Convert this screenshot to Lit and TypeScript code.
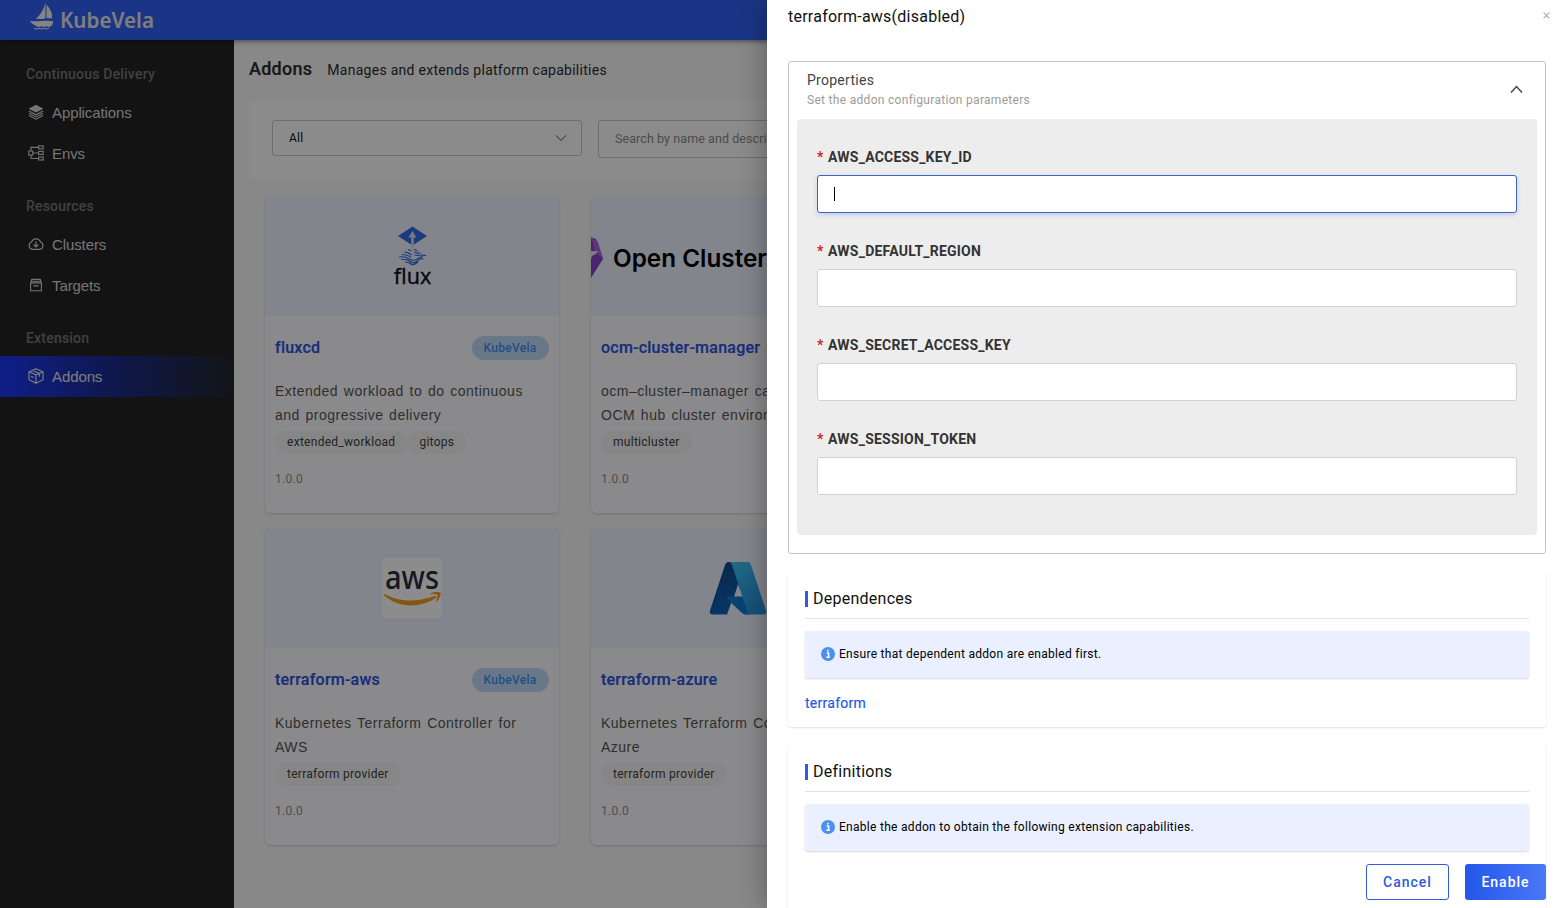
import { LitElement, html, css, svg, nothing } from "lit";
import { customElement, property } from "lit/decorators.js";

const icons: Record<string, unknown> = {
  layers: svg`<path fill="currentColor" d="M8 .8 15.4 4.7 8 8.6.6 4.7Z"/><path fill="none" stroke="currentColor" stroke-width="1.1" d="M.9 7.1 8 10.8l7.1-3.7M.9 9.3 8 13l7.1-3.7M.9 11.5 8 15.2l7.1-3.7"/>`,
  tree: svg`<g fill="none" stroke="currentColor" stroke-width="1.1"><rect x=".8" y="6" width="4" height="4"/><rect x="10.6" y=".9" width="4.6" height="3"/><rect x="10.6" y="6.4" width="4.6" height="3"/><rect x="10.6" y="12" width="4.6" height="3"/><path d="M10.6 2.4H3v3.6M4.8 8h5.8M3 10v3.5h7.6"/></g>`,
  cloud: svg`<path fill="none" stroke="currentColor" stroke-width="1.2" d="M4.4 13.3A3.8 3.8 0 0 1 3.6 6 4.7 4.7 0 0 1 12.5 6a3.8 3.8 0 0 1-.8 7.3ZM8 5.6v5M5.6 8.6 8 11l2.4-2.4"/>`,
  archive: svg`<path fill="none" stroke="currentColor" stroke-width="1.1" d="M2.6 5.9h10.8v7.8H2.6ZM2.8 5.7l.9-3.3h8.6l.9 3.3M3.3 4.2h9.4M5.4 8.9h5.2"/>`,
  box: svg`<path fill="none" stroke="currentColor" stroke-width="1.2" stroke-linejoin="round" d="M8 .9 15 3.8v8L8 15.2 1 11.8v-8ZM1 3.8 8 6.9l7-3.1M8 6.9v8.3M4.5 2.4l7 3.1v3.2M3 8.4l2.6 1.2"/>`,
};

@customElement("vela-nav")
class VelaNav extends LitElement {
  static styles = css`
    :host { display: block; width: 234px; flex: none; background: #242424; padding-top: 2px; box-sizing: border-box; font-family: Roboto, sans-serif; }
    .title { padding: 22px 26px 8px; line-height: 20px; font-size: 14px; font-weight: 500; letter-spacing: .2px; color: #777; }
    .item { display: flex; align-items: center; height: 41px; padding-left: 28px; gap: 8px; color: #d6d6d6; font: 15px "Liberation Sans", sans-serif; letter-spacing: -.1px; }
    .item svg { width: 16px; height: 16px; flex: none; margin-bottom: 1px; }
    .active { background: linear-gradient(90deg, #1b38f7, #1d2a80 55%, #202833 96%, #242424); color: #e2e2e8; }
  `;
  groups = [
    { title: "Continuous Delivery", items: [["layers", "Applications"], ["tree", "Envs"]] },
    { title: "Resources", items: [["cloud", "Clusters"], ["archive", "Targets"]] },
    { title: "Extension", items: [["box", "Addons"]] },
  ];
  render() {
    return this.groups.map(
      (g) => html`<div class="title">${g.title}</div>
        ${g.items.map(([icon, label]) => html`<div class="item ${label === "Addons" ? "active" : ""}"><svg viewBox="0 0 16 16">${icons[icon]}</svg><span>${label}</span></div>`)}`
    );
  }
}

interface Addon { name: string; desc: string[]; tags: string[]; logo: unknown; }

const fluxLogo = html`<svg width="60" height="64" viewBox="0 -1 60 64" overflow="visible">
  <path fill="#326ce5" d="M30.5 1.500 45 11 30.500 20.500 16 11Z"/>
  <path fill="#d8e0ee" d="M30.500 6l4 6.500h-2.700V32h-2.600V12.500h-2.700Z"/>
  <g fill="none" stroke="#326ce5" stroke-width="1.2"><path d="M26 24.500q2 1 3 1.500M22.500 27q4 0 6.500 3M19.500 29.500q6 0 9.500 3M17 32q6-1 10 2t10-1 7-2M19 34.500q5-1 9 2t8-1 5-1M23 37q4 0 6 2t7-2M32.500 24q1 2 3 1.500M32.500 27q3 2 6 .5M32.500 30q4 1 8.500-.5"/></g>
  <text x="30.500" y="59" text-anchor="middle" font-family="Noto Sans" font-size="22.500" textLength="37.500" lengthAdjust="spacingAndGlyphs" fill="#111" stroke="#111" stroke-width=".3">flux</text>
</svg>`;
const ocmLogo = html`<svg width="294" height="120" viewBox="0 0 294 120">
  <path fill="#8a3fd0" d="M-4 40 5 43 12 63 0 82-6 84Z"/><path fill="#a964e0" d="M0 41 7 46 12 63 4 55Z"/><path fill="#e3e2f1" d="M-2 55h9l-2 3-4 2-3 8Z"/>
  <text x="22" y="71" font-family="Inter" font-weight="600" font-size="24.500" textLength="154" lengthAdjust="spacingAndGlyphs" fill="#000">Open Cluster</text>
</svg>`;
const awsLogo = html`<svg width="60" height="60" viewBox="0 0 60 60" overflow="visible">
  <rect width="60" height="60" rx="1" fill="#fff"/>
  <text x="3" y="30.500" font-family="Noto Sans" font-weight="500" font-size="32" textLength="54" lengthAdjust="spacingAndGlyphs" fill="#252f3e">aws</text>
  <path fill="#f79b1e" d="M2 36c1-.7 18 13.500 51 2 2-.6 2 1 .6 2C38 50.500 16 50 2 37.300Z"/>
  <path fill="#f79b1e" d="M48.500 35.500c3-2 9-2 10-.7.700 2-1.500 7-4 9-1 .3-.4-.8 0-2 .8-2 1.600-4 1-5-1.500-1-4-.7-6-.5-1 0-1.500-.5-1-.8Z"/>
</svg>`;
const azureLogo = html`<svg width="60" height="60" viewBox="0 0 60 60">
  <defs>
    <linearGradient id="azl" x1="0" y1="0" x2="0" y2="1"><stop offset="0" stop-color="#114a8b"/><stop offset="1" stop-color="#0b63b8"/></linearGradient>
    <linearGradient id="azr" x1="0" y1="0" x2="0.400" y2="1"><stop offset="0" stop-color="#3fc5ef"/><stop offset="1" stop-color="#2892df"/></linearGradient>
  </defs>
  <path fill="url(#azl)" d="M20.500 4H28L34 26 23 53.500q-1 3-4 3H5q-4 0-3-4L17 7q1-3 3.500-3Z"/>
  <path fill="#edf2ff" d="M30 26 35 39H26ZM23.500 44 37 56.500H19Z"/>
  <path fill="#0f78d4" d="M19.500 38.500H38L42 56.500H37Q35 56 33 54L18.500 40.500Z"/>
  <path fill="url(#azr)" d="M20.500 4H39q3 0 4 3l15 45.500q1 4-3 4H37q3-.5 2-4L24 7q-1-3-3.500-3Z"/>
</svg>`;

@customElement("addon-card")
class AddonCard extends LitElement {
  @property({ attribute: false }) addon!: Addon;
  static styles = css`
    :host { display: block; width: 294px; height: 317px; border-radius: 6px; background: #fcfcff; box-shadow: 0 1px 3px rgba(0, 0, 0, .16); overflow: hidden; font-family: Roboto, sans-serif; }
    .cover { height: 120px; background: #edf2ff; display: flex; align-items: center; justify-content: center; }
    .body { padding: 19px 10px 0 10.500px; }
    .head { display: flex; align-items: center; justify-content: space-between; height: 26px; }
    .name { font-size: 16px; font-weight: 500; letter-spacing: .23px; color: #2b53e0; white-space: nowrap; margin-bottom: 2px; -webkit-text-stroke: .2px #2b53e0; }
    .vela { height: 24px; width: 77px; border-radius: 12px; background: #c0dafa; color: #4191ef; font-size: 12px; font-weight: 500; letter-spacing: .3px; line-height: 24px; text-align: center; }
    .desc { margin-top: 18px; font: 14px/24px "Liberation Sans", sans-serif; letter-spacing: .5px; word-spacing: 1.3px; color: #555; white-space: nowrap; }
    .tags { display: flex; margin-top: 4px; }
    .tag { height: 23px; line-height: 23px; border-radius: 12px; background: #f4f4f4; padding: 0 12px; font-size: 12px; letter-spacing: .28px; color: #404040; white-space: nowrap; }
    .version { margin-top: 15px; line-height: 20px; font-size: 12px; letter-spacing: .3px; color: #8c8c8c; }
  `;
  render() {
    const a = this.addon;
    return html`<div class="cover">${a.logo}</div>
      <div class="body">
        <div class="head"><span class="name">${a.name}</span><span class="vela">KubeVela</span></div>
        <div class="desc">${a.desc.map((d) => html`<div>${d}</div>`)}</div>
        <div class="tags">${a.tags.map((t) => html`<span class="tag">${t}</span>`)}</div>
        <div class="version">1.0.0</div>
      </div>`;
  }
}

@customElement("addon-drawer")
class AddonDrawer extends LitElement {
  static styles = css`
    :host { display: flex; flex-direction: column; box-sizing: border-box; background: #fff; padding: 0 13px 0 21px; font-family: Roboto, sans-serif; letter-spacing: .27px; color: #111; overflow: hidden; }
    .top { display: flex; justify-content: space-between; align-items: center; height: 33px; flex: none; margin-bottom: 28px; font-size: 16px; letter-spacing: .24px; }
    .close { width: 7px; height: 7px; margin: 0 -3.500px 2px 0; }
    .props { border: 1px solid #c4c4c4; border-radius: 3px; height: 493px; box-sizing: border-box; flex: none; padding: 0 8px; }
    .phead { display: flex; justify-content: space-between; align-items: center; height: 57px; padding: 0 14px 0 10px; }
    .ptitle { font-size: 14px; line-height: 20px; margin-top: -1px; color: #444; }
    .psub { font-size: 12px; line-height: 20px; letter-spacing: .3px; color: #9b9b9b; }
    .chev { width: 13px; height: 9px; margin-bottom: 2px; }
    .form { background: #ededed; border-radius: 4px; height: 416px; box-sizing: border-box; padding: 28px 20px 0; }
    .field { height: 94px; }
    .label { font-size: 14px; font-weight: 700; line-height: 20px; letter-spacing: .22px; color: #333; margin-bottom: 8px; }
    .star { color: #c8262c; margin-right: 4.500px; }
    .input { height: 38px; box-sizing: border-box; background: #fff; border: 1px solid #d2d2d2; border-radius: 3px; padding: 11px 16px; }
    .focus { border-color: #3a62c8; box-shadow: 0 2px 5px rgba(40, 80, 190, .2); }
    .caret { width: 1px; height: 14px; background: #000; }
    .section { flex: none; box-sizing: border-box; height: 156px; margin-top: 17px; padding: 17px 17px 0; border-radius: 3px; box-shadow: 0 1px 2px rgba(0, 0, 0, .12); }
    .stitle { display: flex; align-items: center; gap: 5px; height: 21px; padding-bottom: 9px; border-bottom: 1px solid #e2e2e2; font-size: 16px; letter-spacing: .25px; }
    .bar { width: 3px; height: 16px; background: #2f5bdc; }
    .msg { display: flex; align-items: center; gap: 4px; height: 47px; padding: 0 16px 2px; box-sizing: border-box; margin-top: 12px; border-radius: 3px; background: #eaf0ff; box-shadow: 0 1px 2px rgba(0, 0, 0, .16); font-size: 12px; letter-spacing: .29px; color: #000; }
    .msg svg { width: 14px; height: 14px; }
    .link { margin-top: 15px; line-height: 20px; font-size: 14px; color: #2456e0; -webkit-text-stroke: .15px #2456e0; }
    .tall { height: 240px; }
    .actions { position: absolute; right: 13px; bottom: 8px; display: flex; gap: 16px; }
    .btn { height: 36px; box-sizing: border-box; border-radius: 3px; font: 500 14px/34px Roboto, sans-serif; letter-spacing: 1px; text-align: center; padding: 0; }
    .cancel { width: 83px; border: 1px solid #2f5bdc; color: #2f5bdc; background: #fff; }
    .enable { width: 81px; border: 1px solid transparent; color: #fff; background: linear-gradient(90deg, #2457ea, #4a78f8) border-box; }
  `;
  keys = ["AWS_ACCESS_KEY_ID", "AWS_DEFAULT_REGION", "AWS_SECRET_ACCESS_KEY", "AWS_SESSION_TOKEN"];
  section(title: string, msg: string, link: string) {
    return html`<div class="section ${link ? "" : "tall"}">
      <div class="stitle"><span class="bar"></span><span>${title}</span></div>
      <div class="msg"><svg viewBox="0 0 14 14"><circle cx="7" cy="7" r="7" fill="#4a90ee"/><path d="M5.600 6h2v4.300M5.300 10.300h3.500M6.900 2.700v1.800" stroke="#fff" stroke-width="1.500" fill="none"/></svg><span>${msg}</span></div>
      ${link ? html`<div class="link">${link}</div>` : nothing}
    </div>`;
  }
  render() {
    return html`<div class="top"><span>terraform-aws(disabled)</span><svg class="close" viewBox="0 0 7 7"><path d="M.6.6l5.800 5.800M6.400.6.6 6.400" stroke="#aaa" stroke-width="1.100"/></svg></div>
      <div class="props">
        <div class="phead"><div><div class="ptitle">Properties</div><div class="psub">Set the addon configuration parameters</div></div>
          <svg class="chev" viewBox="0 0 13 9"><path d="M1 7.400 6.500 1.600l5.500 5.800" fill="none" stroke="#444" stroke-width="1.500"/></svg></div>
        <div class="form">${this.keys.map((k, i) => html`<div class="field"><div class="label"><span class="star">*</span>${k}</div><div class="input ${i ? "" : "focus"}">${i ? nothing : html`<div class="caret"></div>`}</div></div>`)}</div>
      </div>
      ${this.section("Dependences", "Ensure that dependent addon are enabled first.", "terraform")}
      ${this.section("Definitions", "Enable the addon to obtain the following extension capabilities.", "")}
      <div class="actions"><button class="btn cancel">Cancel</button><button class="btn enable">Enable</button></div>`;
  }
}

@customElement("app-root")
class AppRoot extends LitElement {
  static styles = css`
    :host { display: flex; flex-direction: column; position: relative; height: 908px; width: 1559px; overflow: hidden; background: #f7f7f7; font-family: Roboto, sans-serif; }
    .header { height: 40px; flex: none; background: #3162f2; box-shadow: 0 1px 5px rgba(0, 0, 0, .5); padding-left: 29px; z-index: 1; }
    .logo { display: block; }
    .shell { display: flex; flex: 1; min-height: 0; }
    .main { flex: 1; padding: 15px; min-width: 0; }
    .heading { display: flex; align-items: baseline; gap: 15px; height: 45px; line-height: 28px; white-space: nowrap; }
    .h1 { font-size: 18px; font-weight: 500; color: #2c2c2c; letter-spacing: .27px; -webkit-text-stroke: .2px #2c2c2c; }
    .sub { font-size: 14px; color: #2c2c2c; letter-spacing: .27px; }
    .filters { display: flex; align-items: flex-start; gap: 16px; height: 80px; box-sizing: border-box; padding: 20px 23px; background: #fdfdfd; border-radius: 5px; }
    .select, .search { box-sizing: border-box; width: 310px; border: 1px solid #c8c8c8; border-radius: 3px; padding: 0 14px 0 16px; font-size: 12px; }
    .select { display: flex; align-items: center; justify-content: space-between; height: 36px; color: #111; letter-spacing: .2px; }
    .select svg { width: 12px; height: 8px; }
    .search { height: 38px; line-height: 36px; color: #8a8a8a; font-size: 12.500px; white-space: nowrap; letter-spacing: .08px; }
    .grid { display: grid; grid-template-columns: repeat(4, 294px); gap: 15px 32px; padding: 16px 0 0 15.500px; }
    .mask { position: absolute; inset: 0; background: rgba(0, 0, 0, .45); z-index: 2; }
    .drawer { position: absolute; top: 0; right: 0; bottom: 0; width: 792px; z-index: 3; box-shadow: -2px 0 24px rgba(0, 0, 0, .3); }
  `;
  addons: Addon[] = [
    { name: "fluxcd", desc: ["Extended workload to do continuous", "and progressive delivery"], tags: ["extended_workload", "gitops"], logo: fluxLogo },
    { name: "ocm-cluster-manager", desc: ["ocm–cluster–manager can", "OCM hub cluster environment"], tags: ["multicluster"], logo: ocmLogo },
    { name: "terraform-aws", desc: ["Kubernetes Terraform Controller for", "AWS"], tags: ["terraform provider"], logo: awsLogo },
    { name: "terraform-azure", desc: ["Kubernetes Terraform Controller for", "Azure"], tags: ["terraform provider"], logo: azureLogo },
  ];
  render() {
    return html`<div class="header">
        <svg class="logo" width="130" height="36" viewBox="0 0 130 36" overflow="visible"><g fill="#f2f0f0">
          <path d="M16.400 2Q14.600 12 7 18.800q5 .4 9.400-.4ZM17.500 4.500Q24 12 23 18.500q-3-.8-5.500-.4Z"/>
          <path d="M1 20.800q5 1 11 .2 8-.7 12.500.4-1 3.600-3 5.200l-2 .4-2-.8-2.500.8-2.500-.8-2.500.8-2.500-.8q-5-2-6.500-5.400Z"/>
          <path d="M5 27.700l2.500.8 2.500-.8 2.500.8 2.500-.8 2.500.8 2.500-.8v1l-2.500.8-2.500-.8-2.500.8-2.500-.8-2.500.8-2.500-.8Z"/></g>
          <text x="31" y="27.500" font-family="Noto Sans" font-weight="600" font-size="21.500" textLength="94" lengthAdjust="spacingAndGlyphs" fill="#e8e6e6">KubeVela</text>
        </svg></div>
      <div class="shell"><vela-nav></vela-nav>
        <div class="main">
          <div class="heading"><span class="h1">Addons</span><span class="sub">Manages and extends platform capabilities</span></div>
          <div class="filters"><div class="select"><span>All</span><svg viewBox="0 0 12 8"><path d="M1 1.300 6 6.300l5-5" fill="none" stroke="#8a8a8a" stroke-width="1.200"/></svg></div><div class="search">Search by name and description etc</div></div>
          <div class="grid">${[0, 1, 2, 3].map((i) => html`<addon-card .addon=${this.addons[i]} style="grid-column:${(i % 2) + 1}"></addon-card>`)}</div>
        </div></div>
      <div class="mask"></div>
      <addon-drawer class="drawer"></addon-drawer>`;
  }
}
